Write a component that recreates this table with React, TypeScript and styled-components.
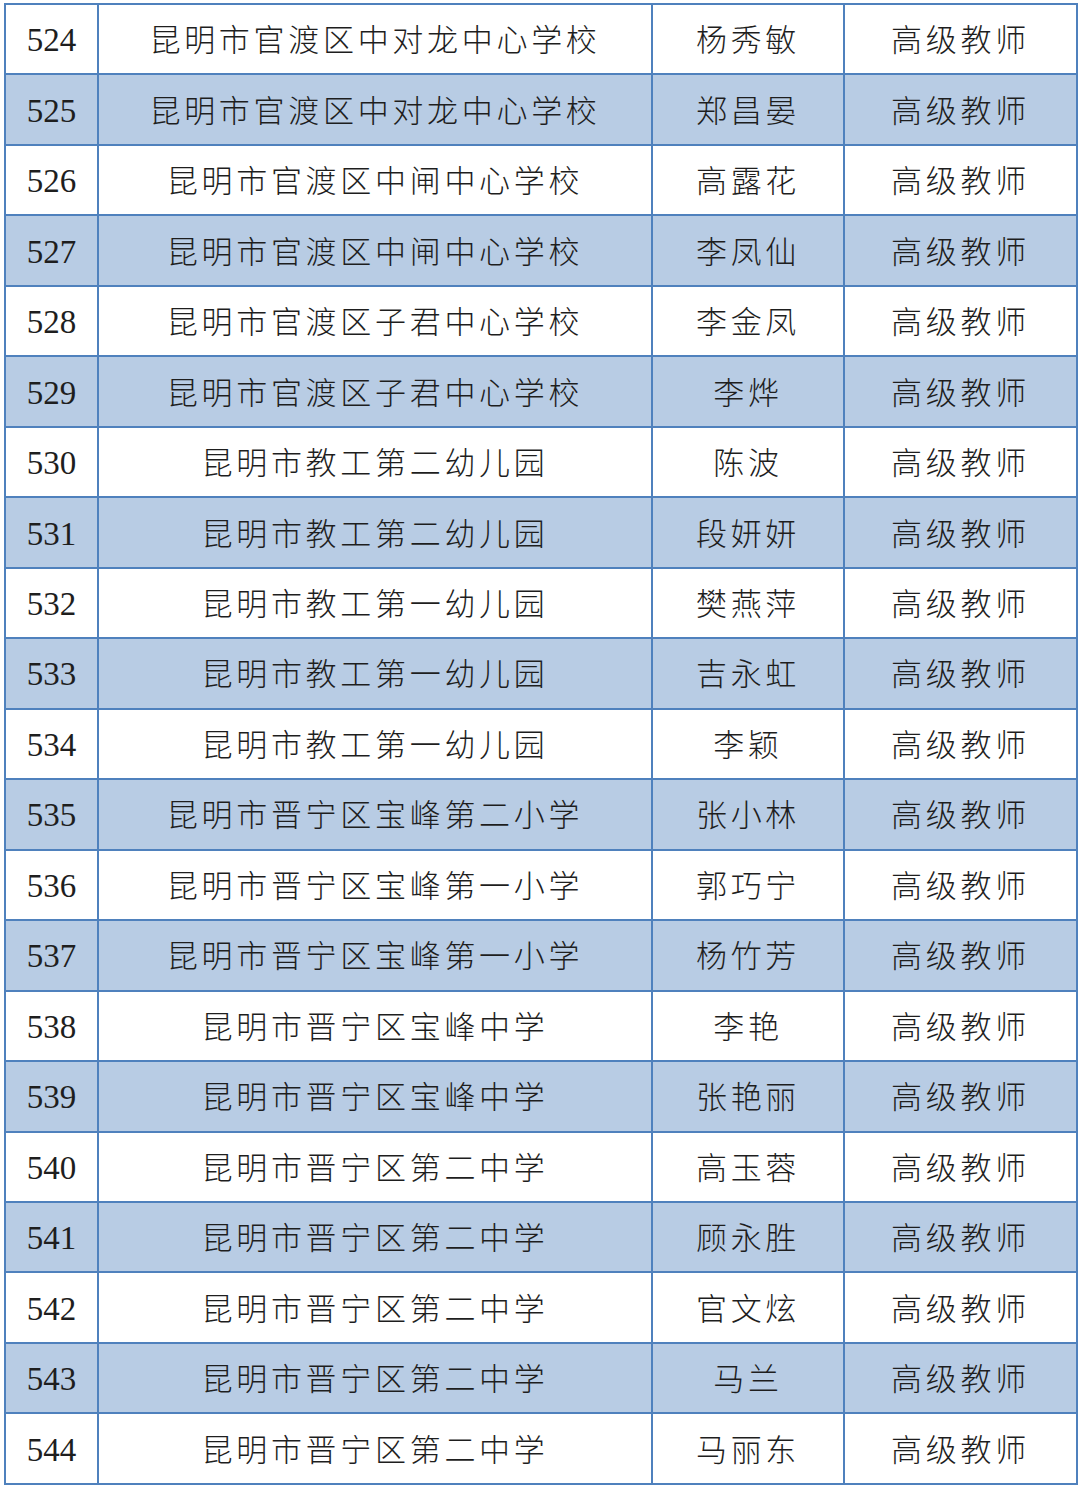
import styled, { createGlobalStyle } from "styled-components";

const GlobalStyle = createGlobalStyle`
  html, body {
    margin: 0;
    padding: 0;
    background: #ffffff;
  }
`;

const Page = styled.div`
  width: 1080px;
  height: 1486px;
  padding: 3px 0 0 4px;
  box-sizing: border-box;
  background: #ffffff;
`;

const Table = styled.table`
  border-collapse: collapse;
  table-layout: fixed;
  width: 1072px;
  color: #1e1e1e;
`;

const Column = styled.col<{ $width: number }>`
  width: ${({ $width }) => $width}px;
`;

const Row = styled.tr<{ $shaded: boolean }>`
  height: 70.48px;
  background: ${({ $shaded }) => ($shaded ? "#b8cce4" : "#ffffff")};
`;

const Cell = styled.td`
  border: 2px solid #4f81bd;
  padding: 0 0 3px 0;
  text-align: center;
  vertical-align: middle;
  font-family: "Noto Sans CJK SC", sans-serif;
  font-weight: 300;
  font-size: 31px;
  letter-spacing: 3.7px;
  line-height: 1;
  white-space: nowrap;
`;

const NumCell = styled(Cell)`
  font-family: "Liberation Serif", "Noto Sans CJK SC", serif;
  font-weight: 400;
  font-size: 33px;
  letter-spacing: 0;
  padding: 3px 0 0 0;
`;

const rows: [number, string, string][] = [
  [524, "昆明市官渡区中对龙中心学校", "杨秀敏"],
  [525, "昆明市官渡区中对龙中心学校", "郑昌晏"],
  [526, "昆明市官渡区中闸中心学校", "高露花"],
  [527, "昆明市官渡区中闸中心学校", "李凤仙"],
  [528, "昆明市官渡区子君中心学校", "李金凤"],
  [529, "昆明市官渡区子君中心学校", "李烨"],
  [530, "昆明市教工第二幼儿园", "陈波"],
  [531, "昆明市教工第二幼儿园", "段妍妍"],
  [532, "昆明市教工第一幼儿园", "樊燕萍"],
  [533, "昆明市教工第一幼儿园", "吉永虹"],
  [534, "昆明市教工第一幼儿园", "李颖"],
  [535, "昆明市晋宁区宝峰第二小学", "张小林"],
  [536, "昆明市晋宁区宝峰第一小学", "郭巧宁"],
  [537, "昆明市晋宁区宝峰第一小学", "杨竹芳"],
  [538, "昆明市晋宁区宝峰中学", "李艳"],
  [539, "昆明市晋宁区宝峰中学", "张艳丽"],
  [540, "昆明市晋宁区第二中学", "高玉蓉"],
  [541, "昆明市晋宁区第二中学", "顾永胜"],
  [542, "昆明市晋宁区第二中学", "官文炫"],
  [543, "昆明市晋宁区第二中学", "马兰"],
  [544, "昆明市晋宁区第二中学", "马丽东"],
];

export default function App() {
  return (
    <Page>
      <GlobalStyle />
      <Table>
        <colgroup>
          <Column $width={93} />
          <Column $width={554} />
          <Column $width={192} />
          <Column $width={233} />
        </colgroup>
        <tbody>
          {rows.map(([num, school, name], i) => (
            <Row key={num} $shaded={i % 2 === 1}>
              <NumCell>{num}</NumCell>
              <Cell>{school}</Cell>
              <Cell>{name}</Cell>
              <Cell>高级教师</Cell>
            </Row>
          ))}
        </tbody>
      </Table>
    </Page>
  );
}
